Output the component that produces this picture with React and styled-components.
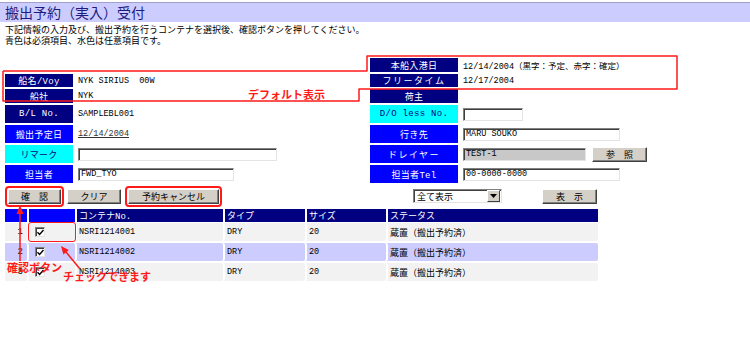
import React from 'react';
import styled, { createGlobalStyle } from "styled-components";

const Global = createGlobalStyle`
    body {
        margin: 0;
        background: #fff;
        font-family: "Noto Sans CJK JP", sans-serif;
        color: #000;
    }
`;

const tones = {
    navy: { bg: '#000080', fg: '#fff' },
    blue: { bg: '#0000ff', fg: '#fff' },
    cyan: { bg: '#00ffff', fg: '#000080' },
};

const RED = '#ff1a1a';

const App = () => {
    const rows = [
        { no: 1, id: 'NSRI1214001', type: 'DRY', size: '20', status: '蔵置（搬出予約済）', marked: true },
        { no: 2, id: 'NSRI1214002', type: 'DRY', size: '20', status: '蔵置（搬出予約済）', alt: true },
        { no: 3, id: 'NSRI1214003', type: 'DRY', size: '20', status: '蔵置（搬出予約済）' },
    ];

    return (
        <Page>
            <Global />
            <TitleBar>搬出予約（実入）受付</TitleBar>
            <Intro>
                下記情報の入力及び、搬出予約を行うコンテナを選択後、確認ボタンを押してください。<br />
                青色は必須項目、水色は任意項目です。
            </Intro>

            <FormGrid>
                <Blank />
                <Label $tone="navy">本船入港日</Label>
                <Value>12/14/2004（黒字：予定、赤字：確定）</Value>

                <Label $tone="navy">船名/Voy</Label>
                <Value>NYK SIRIUS&nbsp;&nbsp;00W</Value>
                <Label $tone="navy" $spaced>フリータイム</Label>
                <Value>12/17/2004</Value>

                <Label $tone="navy">船社</Label>
                <Value>NYK</Value>
                <Label $tone="navy">荷主</Label>
                <Value />

                <Label $tone="navy">B/L No.</Label>
                <Value>SAMPLEBL001</Value>
                <Label $tone="cyan">D/O less No.</Label>
                <Value><Field $w={60} /></Value>

                <Label $tone="blue">搬出予定日</Label>
                <Value><DateLink>12/14/2004</DateLink></Value>
                <Label $tone="blue">行き先</Label>
                <Value><Field $w={157}>MARU SOUKO</Field></Value>

                <Label $tone="cyan">リマーク</Label>
                <Value><Field $w={199} /></Value>
                <Label $tone="blue" $spaced>ドレイヤー</Label>
                <Value>
                    <Field $w={123} $disabled>TEST-1</Field>
                    <Button $w={55} $gap={6}>参　照</Button>
                </Value>

                <Label $tone="blue">担当者</Label>
                <Value><Field $w={156}>FWD_TYO</Field></Value>
                <Label $tone="blue">担当者Tel</Label>
                <Value><Field $w={157}>00-0000-0000</Field></Value>
            </FormGrid>

            <Toolbar>
                <Button $w={53} $marked>確　認</Button>
                <Button $w={54} $gap={6}>クリア</Button>
                <Button $w={91} $gap={7} $marked>予約キャンセル</Button>
                <Select>
                    <span>全て表示</span>
                    <SelectArrow>
                        <svg width="7" height="4" viewBox="0 0 7 4"><path d="M0 0H7L3.5 4Z" fill="#000" /></svg>
                    </SelectArrow>
                </Select>
                <Button $w={55} $gap={40}>表　示</Button>
            </Toolbar>

            <Table>
                <HeadRow>
                    <HeadCell $light />
                    <HeadCell $light />
                    <HeadCell>コンテナNo.</HeadCell>
                    <HeadCell>タイプ</HeadCell>
                    <HeadCell>サイズ</HeadCell>
                    <HeadCell>ステータス</HeadCell>
                </HeadRow>
                {rows.map(r => (
                    <BodyRow key={r.no} $alt={r.alt}>
                        <Cell $right>{r.no}</Cell>
                        <Cell $marked={r.marked}><Check /></Cell>
                        <Cell $mono>{r.id}</Cell>
                        <Cell $mono>{r.type}</Cell>
                        <Cell $mono>{r.size}</Cell>
                        <Cell>{r.status}</Cell>
                    </BodyRow>
                ))}
            </Table>

            <Overlay width="750" height="340" viewBox="0 0 750 340">
                <polyline
                    points="3,71 367,71 367,56 677,56 677,89 359,89 359,101 3,101 3,71"
                    fill="none" stroke={RED} strokeWidth="1.5" strokeLinejoin="round" />
                <line x1="20" y1="261" x2="20" y2="212" stroke={RED} strokeWidth="1.5" />
                <polygon points="20,205 16.5,214 23.5,214" fill={RED} />
                <line x1="80" y1="269" x2="66" y2="252" stroke={RED} strokeWidth="1.5" />
                <polygon points="61,246 68.8,250 63.4,254.4" fill={RED} />
            </Overlay>
            <Note $x={248} $y={87}>デフォルト表示</Note>
            <Note $x={7} $y={260}>確認ボタン</Note>
            <Note $x={63} $y={269}>チェックできます</Note>
        </Page>
    );
};

export default App;


const Page = styled.div`
    position: relative;
    width: 750px;
    height: 340px;
    padding-top: 2px;
    box-sizing: border-box;
    overflow: hidden;
`;

const TitleBar = styled.h1`
    margin: 0;
    height: 19px;
    padding-left: 5px;
    background: #ccccff;
    border-top: 1px solid #a0a0c8;
    font-size: 14px;
    line-height: 19px;
    font-weight: normal;
    color: #1c1c80;
`;

const Intro = styled.p`
    margin: 2px 0 0 5px;
    font-size: 9px;
    line-height: 11px;
`;

const FormGrid = styled.div`
    display: grid;
    grid-template-columns: 68px 293px 88px 288px;
    grid-template-rows: 14px 13px 14px 18px 18px 18px 18px;
    gap: 2px;
    margin: 12px 0 0 5px;
`;

const Blank = styled.div`
    grid-column: span 2;
`;

const Label = styled.div`
    display: flex;
    align-items: center;
    justify-content: center;
    background: ${p => tones[p.$tone].bg};
    color: ${p => tones[p.$tone].fg};
    font-family: "Liberation Mono", "Noto Sans CJK JP", monospace;
    font-size: 9px;
    letter-spacing: ${p => (p.$spaced ? '1.5px' : '0.3px')};
`;

const Value = styled.div`
    display: flex;
    align-items: center;
    padding-left: 3px;
    font-family: "Liberation Mono", "Noto Sans CJK JP", monospace;
    font-size: 8.5px;
    white-space: nowrap;
`;

const DateLink = styled.span`
    color: #333;
    text-decoration: underline;
`;

const Field = styled.div`
    width: ${p => p.$w}px;
    height: 13px;
    box-sizing: border-box;
    padding: 0 2px;
    display: flex;
    align-items: center;
    background: ${p => (p.$disabled ? '#c8c8c8' : '#fff')};
    border: 1px solid;
    border-color: #808080 #e4e4e4 #e4e4e4 #808080;
    box-shadow: inset 1px 1px 0 #404040;
    font-family: "Liberation Mono", monospace;
    font-size: 8.5px;
`;

const Button = styled.div`
    width: ${p => p.$w}px;
    height: 15px;
    margin-left: ${p => p.$gap || 0}px;
    box-sizing: border-box;
    display: flex;
    align-items: center;
    justify-content: center;
    background: #d4d0c8;
    border: 1px solid;
    border-color: #fff #404040 #404040 #fff;
    box-shadow: inset -1px -1px 0 #808080;
    font-size: 9px;
    outline: ${p => (p.$marked ? `2px solid ${RED}` : 'none')};
    outline-offset: 1px;
    border-radius: 1px;
`;

const Toolbar = styled.div`
    display: flex;
    align-items: center;
    height: 16px;
    margin: 5px 0 0 8px;
`;

const Select = styled.div`
    width: 89px;
    height: 14px;
    margin-left: 194px;
    box-sizing: border-box;
    display: flex;
    align-items: center;
    justify-content: space-between;
    padding-left: 3px;
    background: #fff;
    border: 1px solid;
    border-color: #808080 #e4e4e4 #e4e4e4 #808080;
    box-shadow: inset 1px 1px 0 #404040;
    font-size: 9px;
`;

const SelectArrow = styled.span`
    width: 11px;
    height: 10px;
    margin-right: 1px;
    display: flex;
    align-items: center;
    justify-content: center;
    background: #d4d0c8;
    border: 1px solid;
    border-color: #fff #404040 #404040 #fff;
`;

const Table = styled.div`
    width: 593px;
    margin: 5px 0 0 5px;
    display: grid;
    row-gap: 2px;
`;

const cols = '22px 46px 146px 80px 79px 1fr';

const HeadRow = styled.div`
    display: grid;
    grid-template-columns: ${cols};
    column-gap: 2px;
    height: 13px;
    margin-bottom: -1px;
`;

const HeadCell = styled.div`
    display: flex;
    align-items: center;
    padding-left: 2px;
    background: ${p => (p.$light ? '#0000ff' : '#000080')};
    color: #fff;
    font-family: "Liberation Mono", "Noto Sans CJK JP", monospace;
    font-size: 9px;
`;

const BodyRow = styled.div`
    display: grid;
    grid-template-columns: ${cols};
    column-gap: 2px;
    height: 18px;
    background: ${p => (p.$alt ? '#ccccff' : '#f2f2f2')};
`;

const Cell = styled.div`
    display: flex;
    align-items: center;
    justify-content: ${p => (p.$right ? 'flex-end' : 'flex-start')};
    padding: ${p => (p.$right ? '0 4px 0 0' : '0 0 0 2px')};
    font-family: ${p => (p.$mono ? '"Liberation Mono", monospace' : '"Liberation Mono", "Noto Sans CJK JP", monospace')};
    font-size: ${p => (p.$mono ? '8.5px' : '9px')};
    outline: ${p => (p.$marked ? `1.5px solid ${RED}` : 'none')};
    outline-offset: -0.5px;
    border-radius: 2px;
    box-shadow: 2px 0 0 #fff;
`;

const CheckBox = styled.span`
    width: 10px;
    height: 10px;
    margin-left: 4px;
    box-sizing: border-box;
    display: flex;
    align-items: center;
    justify-content: center;
    background: #fff;
    border: 1px solid;
    border-color: #808080 #e4e4e4 #e4e4e4 #808080;
    box-shadow: inset 1px 1px 0 #404040;
`;

const Check = () => (
    <CheckBox>
        <svg width="7" height="7" viewBox="0 0 7 7">
            <path d="M0.5 3.2L2.6 5.4L6.5 1" fill="none" stroke="#000" strokeWidth="1.4" />
        </svg>
    </CheckBox>
);

const Overlay = styled.svg`
    position: absolute;
    left: 0;
    top: 0;
    pointer-events: none;
`;

const Note = styled.span`
    position: absolute;
    left: ${p => p.$x}px;
    top: ${p => p.$y}px;
    color: ${RED};
    font-size: 11px;
    line-height: 14px;
    font-weight: bold;
    white-space: nowrap;
`;
